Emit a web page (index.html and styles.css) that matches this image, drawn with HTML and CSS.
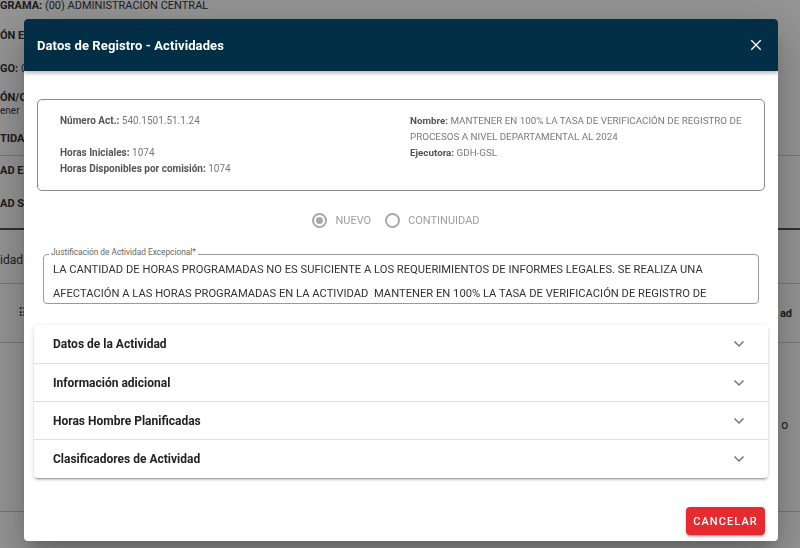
FILE: index.html
```html
<!DOCTYPE html>
<html lang="es">
<head>
<meta charset="utf-8">
<title>Datos de Registro - Actividades</title>
<link rel="stylesheet" href="styles.css">
</head>
<body>
<div class="page">
  <div class="bg-row r1"><span><b>GRAMA:</b> (00) ADMINISTRACION CENTRAL</span></div>
  <div class="bg-row r2"><span><b>ÓN EJECUTORA:</b> GDH-GSL</span></div>
  <div class="bg-row r3"><span><b>GO:</b> 0</span></div>
  <div class="bg-row r4"><span><b>ÓN/COMISIÓN:</b></span><span class="sub">ener</span></div>
  <div class="bg-row r5"><span><b>TIDAD:</b></span></div>
  <div class="bg-line l1"></div>
  <div class="bg-row r6"><span><b>AD EJECUTORA:</b></span></div>
  <div class="bg-row r7"><span><b>AD SOLICITANTE:</b></span></div>
  <div class="bg-line dark"></div>
  <div class="bg-row r8"><span class="big">idad</span></div>
  <div class="bg-line"></div>
  <div class="bg-row r9"><span class="drag">⠿</span><span class="right"><b>ad</b></span></div>
  <div class="bg-line"></div>
  <div class="bg-row r10"><span></span><span class="right big">o</span></div>
  <div class="bg-line"></div>
</div>

<div class="backdrop"></div>

<div class="dialog">
  <div class="dialog-header">
    <h2 class="dialog-title">Datos de Registro - Actividades</h2>
    <svg class="close" width="14" height="14" viewBox="0 0 14 14"><path d="M1.5 1.5L12.5 12.5M12.5 1.5L1.5 12.5" stroke="#fff" stroke-width="1.6" fill="none"/></svg>
  </div>
  <div class="dialog-body">
    <div class="info-box">
      <div class="info-col">
        <div><b>Número Act.:</b> 540.1501.51.1.24</div>
        <div>&nbsp;</div>
        <div><b>Horas Iniciales:</b> 1074</div>
        <div><b>Horas Disponibles por comisión:</b> 1074</div>
      </div>
      <div class="info-col info-right">
        <div><b>Nombre:</b> MANTENER EN 100% LA TASA DE VERIFICACIÓN DE REGISTRO DE PROCESOS A NIVEL DEPARTAMENTAL AL 2024</div>
        <div><b>Ejecutora:</b> GDH-GSL</div>
      </div>
    </div>

    <div class="radio-group">
      <label class="radio checked"><span class="radio-circle"></span>NUEVO</label>
      <label class="radio"><span class="radio-circle"></span>CONTINUIDAD</label>
    </div>

    <div class="field">
      <span class="field-label">Justificación de Actividad Excepcional*</span>
      <div class="field-text">LA CANTIDAD DE HORAS PROGRAMADAS NO ES SUFICIENTE A LOS REQUERIMIENTOS DE INFORMES LEGALES. SE REALIZA UNA AFECTACIÓN A LAS HORAS PROGRAMADAS EN LA ACTIVIDAD  MANTENER EN 100% LA TASA DE VERIFICACIÓN DE REGISTRO DE PROCESOS A NIVEL DEPARTAMENTAL AL 2024</div>
    </div>

    <div class="accordion">
      <div class="panel"><span>Datos de la Actividad</span><svg class="chev" width="12" height="8" viewBox="0 0 12 8"><path d="M1.5 1.5L6 6L10.5 1.5" stroke="#757575" stroke-width="1.5" fill="none"/></svg></div>
      <div class="panel"><span>Información adicional</span><svg class="chev" width="12" height="8" viewBox="0 0 12 8"><path d="M1.5 1.5L6 6L10.5 1.5" stroke="#757575" stroke-width="1.5" fill="none"/></svg></div>
      <div class="panel"><span>Horas Hombre Planificadas</span><svg class="chev" width="12" height="8" viewBox="0 0 12 8"><path d="M1.5 1.5L6 6L10.5 1.5" stroke="#757575" stroke-width="1.5" fill="none"/></svg></div>
      <div class="panel last"><span>Clasificadores de Actividad</span><svg class="chev" width="12" height="8" viewBox="0 0 12 8"><path d="M1.5 1.5L6 6L10.5 1.5" stroke="#757575" stroke-width="1.5" fill="none"/></svg></div>
    </div>
  </div>
  <div class="dialog-actions">
    <button class="btn-cancel">CANCELAR</button>
  </div>
</div>
</body>
</html>
```

FILE: styles.css
```css
* { box-sizing: border-box; }
html, body { margin: 0; padding: 0; }
body {
  width: 800px;
  height: 548px;
  overflow: hidden;
  font-family: Roboto, "Liberation Sans", sans-serif;
  background: #fff;
  color: #333;
}

/* background page */
.page { display: flex; flex-direction: column; font-size: 11px; }
.bg-row { display: flex; justify-content: space-between; align-items: center; padding-right: 8px; flex: none; }
.bg-row b { font-weight: 700; }
.r1 { height: 11px; }
.r2 { height: 48px; }
.r3 { height: 18px; }
.r4 { height: 53px; flex-direction: column; justify-content: center; align-items: flex-start; line-height: 13px; }
.r4 .sub { font-size: 10px; }
.r5 { height: 16px; }
.bg-line { height: 1px; background: #ccc; flex: none; }
.bg-line.l1 { margin-top: 9px; }
.bg-line.dark { height: 2px; background: #555; margin-top: 6px; }
.r6 { height: 28px; }
.r7 { height: 38px; }
.r8 { height: 53px; padding-top: 7px; }
.big { font-size: 12px; }
.r9 { height: 58px; padding-left: 18px; }
.drag { font-size: 12px; }
.right { text-align: right; }
.r10 { height: 168px; padding-right: 12px; padding-bottom: 4px; }

.backdrop {
  position: fixed;
  inset: 0;
  background: rgba(0, 0, 0, 0.42);
}

/* dialog */
.dialog {
  position: fixed;
  left: 24px;
  top: 19px;
  width: 754px;
  height: 522px;
  background: #fff;
  border-radius: 4px;
  overflow: hidden;
  box-shadow: 0 11px 15px -7px rgba(0,0,0,.2), 0 24px 38px 3px rgba(0,0,0,.14), 0 9px 46px 8px rgba(0,0,0,.12);
  display: flex;
  flex-direction: column;
}
.dialog-header {
  height: 52px;
  flex: none;
  background: #022f46;
  display: flex;
  align-items: center;
  justify-content: space-between;
  padding: 0 16px 0 13px;
  box-shadow: 0 2px 4px rgba(0,0,0,.3);
  position: relative;
  z-index: 1;
}
.dialog-title {
  margin: 0;
  color: #fff;
  font-size: 13px;
  font-weight: 700;
  letter-spacing: 0.1px;
}
.close { display: block; width: 12px; height: 12px; }

.dialog-body {
  flex: 1;
  padding: 28px 10px 0;
  display: flex;
  flex-direction: column;
}

.info-box {
  margin: 0 3px;
  height: 92px;
  border: 1px solid #8a8a8a;
  border-radius: 5px;
  padding: 13px 14px 0 22px;
  display: grid;
  grid-template-columns: 1fr 340px;
  column-gap: 18px;
  font-size: 10px;
  line-height: 16px;
  color: #7a7a7a;
}
.info-right { font-size: 9.8px; }
.info-col b { color: #555; font-weight: 700; }

.radio-group {
  display: flex;
  justify-content: center;
  gap: 14px;
  margin-top: 17px;
  padding-right: 10px;
  height: 24px;
  align-items: center;
}
.radio {
  display: flex;
  align-items: center;
  gap: 8px;
  font-size: 11px;
  color: #9e9e9e;
}
.radio-circle {
  width: 15px;
  height: 15px;
  border: 2px solid #a8a8a8;
  border-radius: 50%;
  display: flex;
  align-items: center;
  justify-content: center;
}
.radio.checked .radio-circle::after {
  content: "";
  width: 7px;
  height: 7px;
  border-radius: 50%;
  background: #a8a8a8;
}

.field {
  position: relative;
  margin: 22px 9px 0;
  height: 50px;
  border: 1px solid #9a9a9a;
  border-radius: 4px;
  padding: 3px 8px 0 9px;
}
.field-label {
  position: absolute;
  top: -8px;
  left: 5px;
  padding: 0 2px;
  background: #fff;
  font-size: 8.3px;
  line-height: 10px;
  color: #666;
}
.field-text {
  font-size: 11.2px;
  line-height: 24px;
  color: #333;
  white-space: pre-wrap;
  height: 44px;
  overflow: hidden;
}

.accordion {
  margin-top: 21px;
  background: #fff;
  border-radius: 4px;
  box-shadow: 0 3px 1px -2px rgba(0,0,0,.2), 0 2px 2px 0 rgba(0,0,0,.14), 0 1px 5px 0 rgba(0,0,0,.12);
}
.panel {
  height: 38px;
  display: flex;
  align-items: center;
  justify-content: space-between;
  padding: 0 23px 0 19px;
  font-size: 12px;
  font-weight: 700;
  color: #222;
  border-top: 1px solid #e0e0e0;
}
.panel:first-child { border-top: none; }
.panel.last { height: 39px; }
.chev { display: block; }

.dialog-actions {
  flex: none;
  display: flex;
  justify-content: flex-end;
  padding: 0 13px 6px;
}
.btn-cancel {
  width: 79px;
  height: 28px;
  border: none;
  border-radius: 4px;
  background: #e52b2f;
  color: #fff;
  font-family: Roboto, "Liberation Sans", sans-serif;
  font-size: 11px;
  font-weight: 500;
  letter-spacing: 1.1px;
  padding: 0;
  box-shadow: 0 3px 1px -2px rgba(0,0,0,.2), 0 2px 2px 0 rgba(0,0,0,.14), 0 1px 5px 0 rgba(0,0,0,.12);
}
```
